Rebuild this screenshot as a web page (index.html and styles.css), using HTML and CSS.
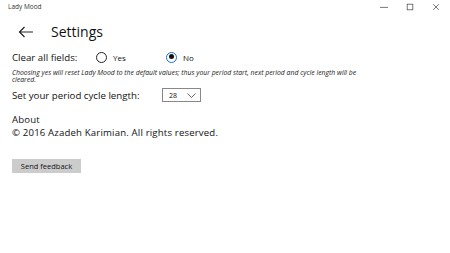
FILE: index.html
```html
<!DOCTYPE html>
<html>
  <head>
    <meta charset="utf-8" />
    <title>Lady Mood</title>
    <link rel="stylesheet" href="styles.css">
  </head>
  <body>
    <!-- title bar -->
    <div class="titleBar">
      <span class="appName">Lady Mood</span>
      <div class="windowControls">
        <svg width="10" height="10" viewBox="0 0 10 10"><line x1="0" y1="5.5" x2="10" y2="5.5" stroke="#555" stroke-width="1"/></svg>
        <svg width="10" height="10" viewBox="0 0 10 10"><rect x="1.5" y="1.5" width="7" height="7" fill="none" stroke="#555" stroke-width="1"/></svg>
        <svg width="10" height="10" viewBox="0 0 10 10"><path d="M1.5 1.5 L8.5 8.5 M8.5 1.5 L1.5 8.5" stroke="#555" stroke-width="1"/></svg>
      </div>
    </div>

    <!-- page header -->
    <div class="pageHeader">
      <svg class="backArrow" width="16" height="12" viewBox="0 0 16 12">
        <path d="M15 6 H1.5 M6.5 1 L1.5 6 L6.5 11" fill="none" stroke="#222" stroke-width="1.2"/>
      </svg>
      <span class="pageTitle">Settings</span>
    </div>

    <div class="content">
      <div class="row">
        <span class="label">Clear all fields:</span>
        <label class="radio"><span class="circle"></span>Yes</label>
        <label class="radio"><span class="circle checked"></span>No</label>
      </div>
      <p class="note">Choosing yes will reset Lady Mood to the default values; thus your period start, next period and cycle length will be cleared.</p>

      <div class="row cycleRow">
        <span class="label">Set your period cycle length:</span>
        <div class="dropdown">
          <span>28</span>
          <svg width="9" height="5" viewBox="0 0 9 5"><path d="M0.5 0.5 L4.5 4.5 L8.5 0.5" fill="none" stroke="#555" stroke-width="0.9"/></svg>
        </div>
      </div>

      <div class="about">
        <div>About</div>
        <div>&copy; 2016 Azadeh Karimian. All rights reserved.</div>
      </div>

      <button class="feedbackButton">Send feedback</button>
    </div>
  </body>
</html>
```

FILE: styles.css
```css
body {
  margin: 0;
  width: 450px;
  height: 253px;
  background-color: #ffffff;
  font-family: "Open Sans", "Noto Sans", sans-serif;
  color: #111;
  overflow: hidden;
}
div.titleBar {
  display: flex;
  justify-content: space-between;
  align-items: center;
  height: 13px;
  padding: 0 0 0 8px;
}
span.appName {
  font-size: 6.5px;
  color: #333;
}
div.windowControls {
  display: flex;
  gap: 18px;
  padding-right: 10px;
  padding-top: 1px;
}
div.windowControls svg {
  width: 8px;
  height: 8px;
}
div.pageHeader {
  display: flex;
  align-items: center;
  height: 37px;
  padding-left: 18px;
}
svg.backArrow {
  margin-right: 17px;
}
span.pageTitle {
  font-size: 14px;
}
div.content {
  padding-left: 12px;
}
div.row {
  display: flex;
  align-items: center;
  height: 14px;
  margin-top: 0;
  font-size: 9.7px;
}
span.label {
  width: 84px;
}
label.radio {
  display: flex;
  align-items: center;
  width: 70px;
  font-size: 8px;
}
span.circle {
  box-sizing: border-box;
  width: 11px;
  height: 11px;
  border: 1.3px solid #222;
  border-radius: 50%;
  margin-right: 6px;
  position: relative;
}
span.circle.checked {
  border-color: #1a6fd0;
}
span.circle.checked::after {
  content: "";
  position: absolute;
  left: 1.5px;
  top: 1.5px;
  width: 5px;
  height: 5px;
  border-radius: 50%;
  background: #111;
}
p.note {
  margin: 5px 0 0 0;
  width: 358px;
  font-size: 6.85px;
  font-style: italic;
  line-height: 7px;
  color: #222;
}
div.cycleRow {
  margin-top: 5px;
}
div.cycleRow span.label {
  width: 150px;
}
div.dropdown {
  box-sizing: border-box;
  display: flex;
  align-items: center;
  justify-content: space-between;
  width: 39px;
  height: 14px;
  border: 1px solid #888;
  padding: 0 4px 0 6px;
  font-size: 7px;
}
div.about {
  margin-top: 11px;
  font-size: 9.6px;
  letter-spacing: 0.17px;
  line-height: 13.2px;
}
button.feedbackButton {
  margin-top: 20px;
  width: 69px;
  height: 14px;
  border: none;
  padding: 0;
  background-color: #cccccc;
  font-family: "Open Sans", "Noto Sans", sans-serif;
  font-size: 7.5px;
  color: #111;
}
```
